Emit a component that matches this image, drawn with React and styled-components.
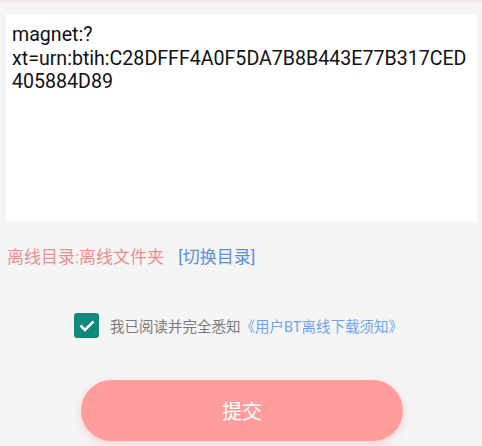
import styled, { createGlobalStyle } from "styled-components";

const Global = createGlobalStyle`
  html, body { margin:0; padding:0; background:#f5f5f5; }
  body { font-family: Roboto, "Noto Sans CJK SC", sans-serif; }
`

const Page = styled.div`
  width:482px;
  height:446px;
  overflow:hidden;
  border-top:3px solid #f6e8ea;
  box-sizing:border-box;
  display:flex;
  flex-direction:column;
  & > * { flex-shrink:0; }
`

const LinkBox = styled.div`
  margin:11px 5px 0 6px;
  height:207px;
  background:#fff;
  padding:9px 6px;
  box-sizing:border-box;
  font-size:19.6px;
  line-height:23.5px;
  color:#111;
  overflow-wrap:anywhere;
`

const DirRow = styled.div`
  display:flex;
  align-items:center;
  gap:14px;
  margin:24px 0 0 7px;
  font-size:17px;
  line-height:24px;
`

const DirText = styled.span`
  color:${p => p.$link ? "#5b8fdb" : "#ec8d8f"};
`

const AgreeRow = styled.div`
  display:flex;
  align-items:center;
  gap:11px;
  margin:44px 0 0 74px;
  font-size:14.5px;
  color:#7a7a7a;
`

const Check = styled.div`
  width:25px;
  height:25px;
  border-radius:3px;
  background:#13897b;
  display:flex;
  align-items:center;
  justify-content:center;
`

const Blue = styled.span`
  color:#6ea5ec;
`

const SubmitButton = styled.button`
  margin:42px 0 0 81px;
  width:322px;
  height:61px;
  border:none;
  border-radius:31px;
  background:#ff9d9d;
  color:#fff;
  font-family:inherit;
  font-size:20px;
  box-shadow:0 3px 8px rgba(255,140,140,.35);
`

const App = () => {
    return (
        <Page>
            <Global />
            <LinkBox>magnet:?xt=urn:btih:C28DFFF4A0F5DA7B8B443E77B317CED405884D89</LinkBox>
            <DirRow>
                <DirText>离线目录:离线文件夹</DirText>
                <DirText $link>[切换目录]</DirText>
            </DirRow>
            <AgreeRow>
                <Check>
                    <svg width="18" height="18" viewBox="0 0 24 24" fill="none" stroke="#fff" strokeWidth="3.4" strokeLinecap="square">
                        <path d="M4.5 12.5l4.8 4.8L19.5 7" />
                    </svg>
                </Check>
                <span>我已阅读并完全悉知<Blue>《用户BT离线下载须知》</Blue></span>
            </AgreeRow>
            <SubmitButton>提交</SubmitButton>
        </Page>
    )
}
export default App;
